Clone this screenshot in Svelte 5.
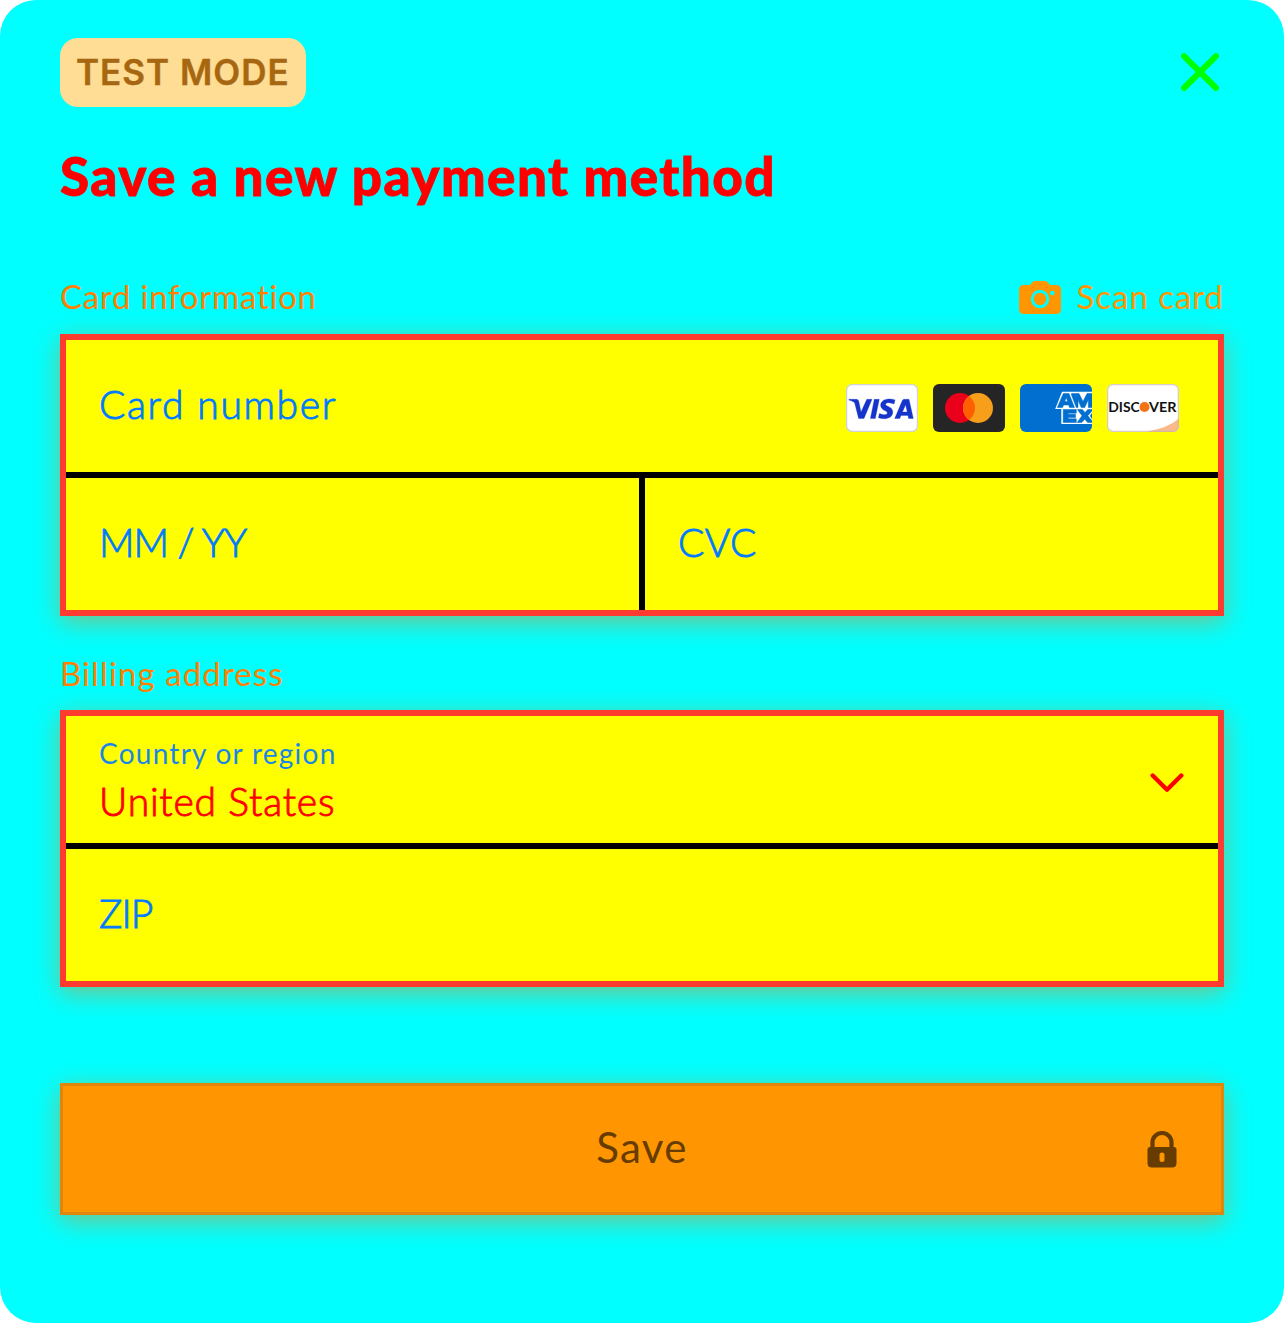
<script>
  const country = 'United States';
</script>

<main class="sheet">
  <header class="topbar">
    <span class="badge">TEST MODE</span>
    <button class="close" aria-label="Close">
      <svg width="40" height="40" viewBox="0 0 40 40"><path d="M4 4.200L36 36M36 4.200L4 36" stroke="#00ff00" stroke-width="6" stroke-linecap="round" /></svg>
    </button>
  </header>

  <h1>Save a new payment method</h1>

  <div class="section-head card-head">
    <span class="t-card">Card information</span>
    <button class="scan">
      <svg width="42" height="33" viewBox="0 0 42 33">
        <path fill="#ff9500" fill-rule="evenodd" d="M5 4H10.500C12 4 13 0 16 0H26C29 0 30 4 31.500 4H37Q42 4 42 9V28Q42 33 37 33H5Q0 33 0 28V9Q0 4 5 4ZM21 8.800A9.200 9.200 0 1 0 21 27.200A9.200 9.200 0 1 0 21 8.800ZM33.300 9.800A2.300 2.300 0 1 0 33.300 14.400A2.300 2.300 0 1 0 33.300 9.800Z" />
        <circle cx="21" cy="18" r="6.200" fill="#ff9500" />
      </svg>
      <span class="t-scan">Scan card</span>
    </button>
  </div>

  <section class="group">
    <div class="row number">
      <span class="field t-number">Card number</span>
      <div class="brands">
        <svg width="72" height="48" viewBox="0 0 72 48">
          <rect x=".6" y=".6" width="70.800" height="46.800" rx="5.500" fill="#fff" stroke="#d2d2d8" stroke-width="1.300" />
          <g fill="#1434cb" stroke="#1434cb" stroke-width=".3">
            <path d="M3 15.300H10.500Q12.300 15.400 12.800 17.300L15 28L20.800 15.300H26L18 34.500H12.600L8.800 19.500Q8.500 18.300 7.300 17.700Q5.300 16.700 2.800 16.100Z" />
            <path d="M28.300 15.300H33.300L29.300 34.500H24.400Z" />
            <path d="M49 15.900L48.100 20Q39.700 17.300 39.600 20.200C39.600 22.400 46.800 22.600 46.800 28C46.800 34.700 38.200 36 32.400 33.700L33.400 29.400Q40.900 32.200 41.400 28.900C41.600 26.800 34.500 26.300 34.600 21C34.700 15.300 43.200 13.600 49 15.900Z" />
            <path fill-rule="evenodd" d="M58 15.300H63L67.300 34.500H62.600L62 31.500H55L53.800 34.500H48.700L56.100 16.900Q56.700 15.400 58 15.300ZM59.600 20.800L56.500 28H61.200Z" />
          </g>
        </svg>
        <svg width="72" height="48" viewBox="0 0 72 48">
          <rect width="72" height="48" rx="6" fill="#252525" />
          <circle cx="27" cy="24" r="15" fill="#eb001b" />
          <circle cx="45" cy="24" r="15" fill="#f79e1b" />
          <path d="M36 12A15 15 0 0 1 36 36A15 15 0 0 1 36 12Z" fill="#ff5f00" />
        </svg>
        <svg width="72" height="48" viewBox="0 0 72 48">
          <rect width="72" height="48" rx="6" fill="#016fd0" />
          <path fill="#fff" d="M42 7.800H72V40H41.300V25H35.200Z" />
          <g fill="#016fd0" stroke="#016fd0" stroke-width=".5">
            <path fill-rule="evenodd" d="M43.300 9.500H49L54.500 23.500H49.500L48.700 21H43.600L42.600 23.500H37.300ZM46.200 13.500L44.800 17.500H47.600Z" />
            <path d="M51.500 9.500H59L63 17.500L67 9.500H72V23.500H68.300V15.800L64.700 23.500H61.200L58 16V23.500H56.300L51.500 11Z" />
            <path d="M43.200 25.500H56.300V29.200H48.300V30.200H55.500V33.600H48.300V34.800H56.300V38.500H43.200Z" />
            <path d="M57.300 25.500H62.400L65 28.500L67.800 25.500H72V26.900L67.800 31.800L72 36.800V38.500H67.700L64.800 35.300L61.800 38.500H57.100L62 31.800Z" />
            <path d="M72 29.300V34.500L70.100 31.800Z" />
          </g>
        </svg>
        <svg width="72" height="48" viewBox="0 0 72 48">
          <defs><clipPath id="brand-clip"><rect width="72" height="48" rx="6" /></clipPath></defs>
          <rect width="72" height="48" rx="6" fill="#fff" />
          <path d="M40 47.500Q61 44 72 34.500V48H40Z" fill="#f9b98a" clip-path="url(#brand-clip)" />
          <rect x=".6" y=".6" width="70.800" height="46.800" rx="5.500" fill="none" stroke="#c8b8b4" stroke-opacity=".7" stroke-width="1.300" />
          <text x="1.300" y="28" class="discover" textLength="31.500" lengthAdjust="spacingAndGlyphs">DISC</text>
          <circle cx="37.500" cy="23" r="5" fill="#f47216" />
          <text x="42" y="28" class="discover" textLength="27.500" lengthAdjust="spacingAndGlyphs">VER</text>
        </svg>
      </div>
    </div>
    <div class="split">
      <div class="row"><span class="field t-date">MM / YY</span></div>
      <div class="row cvc"><span class="field t-cvc">CVC</span></div>
    </div>
  </section>

  <div class="section-head billing-head"><span class="t-billing">Billing address</span></div>

  <section class="group">
    <div class="row country">
      <div class="stack">
        <span class="caption">Country or region</span>
        <span class="value">{country}</span>
      </div>
      <svg class="chevron" width="34" height="20" viewBox="0 0 34 20"><path d="M2.700 2.500L17 16.700L31.300 2.500" fill="none" stroke="#ff0000" stroke-width="4.400" stroke-linecap="round" stroke-linejoin="round" /></svg>
    </div>
    <div class="row zip"><span class="field t-zip">ZIP</span></div>
  </section>

  <button class="save">
    <span>Save</span>
    <svg width="30" height="37" viewBox="0 0 30 37">
      <path d="M5.500 18V11.500A9.500 9.500 0 0 1 24.500 11.500V18" fill="none" stroke="#663c00" stroke-width="4.200" />
      <path fill="#663c00" fill-rule="evenodd" d="M3 16H27Q29.500 16 29.500 18.500V32Q29.500 36.500 25 36.500H5Q.5 36.500 .5 32V18.500Q.5 16 3 16ZM15 21.500Q12.500 21.500 12.500 24V28.500Q12.500 31 15 31Q17.500 31 17.500 28.500V24Q17.500 21.500 15 21.500Z" />
    </svg>
  </button>
</main>

<style>
  :global(body) { margin: 0; background: #fff; }
  * { box-sizing: border-box; }
  .sheet {
    width: 1284px; height: 1323px; padding: 38px 60px 0;
    background: #00ffff; border-radius: 36px; overflow: hidden;
    font-family: Lato, "Open Sans", sans-serif; font-variant-ligatures: none; white-space: nowrap;
  }
  button { border: 0; padding: 0; background: none; font: inherit; color: inherit; }
  svg { display: block; flex: none; }
  .topbar { display: flex; justify-content: space-between; height: 69px; }
  .badge {
    width: 246px; height: 69px; padding-left: 16px; border-radius: 18px; background: #ffdd94; color: #a76711;
    font: 600 35px/69px Inter, sans-serif; letter-spacing: 1px; -webkit-text-stroke: .4px currentColor;
  }
  .close { width: 40px; height: 40px; margin: 14px 4px 0 0; }
  h1 { margin: 36px 0 0; height: 66px; color: #ff0000; font-size: 53px; line-height: 66px; font-weight: 900; letter-spacing: 1.450px; -webkit-text-stroke: .8px currentColor; }
  .section-head { display: flex; align-items: center; justify-content: space-between; height: 44px; color: #ff8000; font-size: 33px; line-height: 44px; }
  .section-head span { padding-bottom: 3px; }
  .card-head { margin: 66px 0 15px; }
  .t-card { letter-spacing: .75px; }
  .t-billing { letter-spacing: 1.100px; }
  .scan { display: flex; align-items: center; gap: 16px; color: #ff9500; }
  .t-scan { letter-spacing: .95px; }
  .group { border: 6px solid #ff3b30; background: #ffff00; box-shadow: 0 6px 24px rgba(255, 128, 0, .48); }
  .row { display: flex; align-items: center; justify-content: space-between; height: 132px; padding: 0 33px; }
  .number { padding-right: 39px; }
  .brands { display: flex; gap: 15px; padding-top: 4px; }
  .discover { font: 700 14px Lato, sans-serif; fill: #111; }
  .field { padding-bottom: 4px; color: #007aff; font-size: 39px; line-height: 52px; font-weight: 300; -webkit-text-stroke: .9px currentColor; }
  .t-number { letter-spacing: 1.650px; }
  .t-date { letter-spacing: -.95px; }
  .t-cvc { letter-spacing: .4px; }
  .t-zip { letter-spacing: -.9px; }
  .split { display: grid; grid-template-columns: 573px 1fr; border-top: 6px solid #000; }
  .cvc { border-left: 6px solid #000; }
  .billing-head { margin: 36px 0 14px; }
  .country { height: 127px; }
  .stack { display: flex; flex-direction: column; padding-top: 3px; }
  .caption { color: #1a87e5; font-size: 28px; line-height: 41px; letter-spacing: 1.250px; }
  .value { color: #ff0000; font-size: 39px; line-height: 55px; font-weight: 300; letter-spacing: .8px; -webkit-text-stroke: .9px currentColor; }
  .chevron { margin: 6px 1px 0 0; }
  .zip { height: 138px; border-top: 6px solid #000; }
  .save {
    display: grid; grid-template-columns: 1fr auto 1fr; align-items: center; width: 100%; height: 132px;
    margin-top: 96px; padding: 0 44px; border: 3px solid #df860d; background: #ff9500; color: #663c00;
    font-size: 42px; letter-spacing: 1.300px; box-shadow: 0 6px 24px rgba(255, 128, 0, .48);
  }
  .save span { grid-column: 2; padding-bottom: 4px; }
  .save svg { justify-self: end; }
</style>
